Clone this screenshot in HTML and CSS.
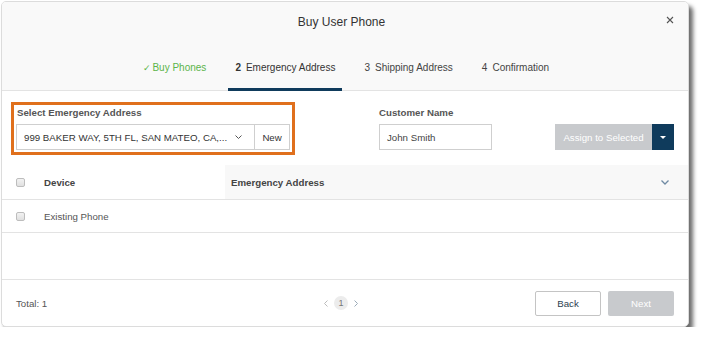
FILE: index.html
```html
<!DOCTYPE html>
<html lang="en">
<head>
<meta charset="utf-8">
<title>Buy User Phone</title>
<link rel="stylesheet" href="styles.css">
</head>
<body>
<div class="dialog">
  <header class="dlg-header">
    <div class="title-row">
      <span></span>
      <h1 class="title">Buy User Phone</h1>
      <button class="close" aria-label="Close">
        <svg width="8" height="8" viewBox="0 0 8 8"><path d="M1 1L7 7M7 1L1 7" stroke="#555" stroke-width="1.1" fill="none"/></svg>
      </button>
    </div>
    <nav class="steps">
      <span class="step done"><span class="check">✓</span>Buy Phones</span>
      <span class="step active"><b class="num">2</b>Emergency Address</span>
      <span class="step"><span class="num">3</span>Shipping Address</span>
      <span class="step"><span class="num">4</span>Confirmation</span>
    </nav>
  </header>

  <section class="content">
    <div class="form-row">
      <div class="highlight">
        <label class="field-label">Select Emergency Address</label>
        <div class="select-group">
          <div class="select">
            <span class="select-text">999 BAKER WAY, 5TH FL, SAN MATEO, CA,...</span>
            <svg class="chev" width="7" height="4" viewBox="0 0 7 4"><polyline points="0.5,0.5 3.5,3.5 6.5,0.5" stroke="#555" stroke-width="1" fill="none"/></svg>
          </div>
          <button class="new-btn">New</button>
        </div>
      </div>
      <div class="field customer">
        <label class="field-label">Customer Name</label>
        <input class="text-input" type="text" value="John Smith">
      </div>
      <div class="split-btn">
        <button class="assign">Assign to Selected</button>
        <button class="caret-btn" aria-label="More">
          <svg width="6" height="3" viewBox="0 0 6 3"><polygon points="0,0 6,0 3,3" fill="#fff"/></svg>
        </button>
      </div>
    </div>

    <div class="table">
      <div class="thead">
        <div class="cell-check"><span class="checkbox"></span></div>
        <div class="cell-device">Device</div>
        <div class="cell-addr">
          <span>Emergency Address</span>
          <svg width="8" height="5" viewBox="0 0 8 5"><polyline points="0.5,0.5 4,4 7.5,0.5" stroke="#6f8aa3" stroke-width="1.3" fill="none"/></svg>
        </div>
      </div>
      <div class="trow">
        <div class="cell-check"><span class="checkbox"></span></div>
        <div class="cell-device">Existing Phone</div>
        <div class="cell-addr"></div>
      </div>
    </div>
  </section>

  <footer class="dlg-footer">
    <div class="total">Total: 1</div>
    <div class="pager">
      <svg width="4" height="7" viewBox="0 0 4 7"><polyline points="3.5,0.5 0.5,3.5 3.5,6.5" stroke="#bbb" stroke-width="1" fill="none"/></svg>
      <span class="page">1</span>
      <svg width="4" height="7" viewBox="0 0 4 7"><polyline points="0.5,0.5 3.5,3.5 0.5,6.5" stroke="#9aaab8" stroke-width="1" fill="none"/></svg>
    </div>
    <div class="actions">
      <button class="btn back">Back</button>
      <button class="btn next">Next</button>
    </div>
  </footer>
</div>
</body>
</html>
```

FILE: styles.css
```css
* { box-sizing: border-box; }

html, body {
  margin: 0;
  padding: 0;
  background: #fff;
  font-family: "Liberation Sans", Arial, sans-serif;
  color: #444;
}

button, input {
  font-family: inherit;
}

.dialog {
  margin: 1px 0 0 1px;
  width: 688px;
  height: 326px;
  border: 1px solid #dcdcdc;
  border-radius: 5px;
  background: #fff;
  box-shadow: 4px 5px 4px rgba(0, 0, 0, 0.58);
  display: flex;
  flex-direction: column;
  overflow: hidden;
}

/* Header */
.dlg-header {
  height: 89px;
  background: #f9f9f9;
  border-bottom: 1px solid #e3e3e3;
  display: flex;
  flex-direction: column;
}

.title-row {
  height: 40px;
  display: grid;
  grid-template-columns: 1fr auto 1fr;
  align-items: center;
  padding: 0 14px 0 7px;
}

.title {
  margin: 0;
  font-size: 12px;
  font-weight: normal;
  color: #333;
  line-height: 40px;
}

.close {
  justify-self: end;
  border: 0;
  background: transparent;
  padding: 0;
  width: 9px;
  height: 9px;
  margin-top: -4px;
  display: flex;
  align-items: center;
  justify-content: center;
}

.steps {
  height: 48px;
  display: flex;
  justify-content: center;
  align-items: flex-end;
  gap: 15px;
  padding-left: 2px;
}

.step {
  font-size: 10px;
  line-height: 12px;
  color: #444;
  padding: 0 7px 14px;
  border-bottom: 3px solid transparent;
  margin-bottom: -1px;
  white-space: nowrap;
}

.step .num {
  margin-right: 5px;
}

.step.done {
  color: #5cb54a;
}

.step.done .check {
  font-size: 9px;
  margin-right: 2px;
  font-family: "DejaVu Sans", sans-serif;
}

.step.active {
  color: #333;
  border-bottom-color: #0f3b5c;
}

.step.active .num {
  font-weight: bold;
}

/* Content */
.content {
  flex: 1;
  display: flex;
  flex-direction: column;
}

.form-row {
  display: flex;
  align-items: flex-start;
  padding: 11px 14px 0 9px;
}

.highlight {
  width: 284px;
  border: 3px solid #e0701c;
  padding: 2px;
}

.field-label {
  display: block;
  font-size: 9.7px;
  font-weight: bold;
  line-height: 12px;
  color: #555;
  margin: 0 0 5px 1px;
}

.select-group {
  display: flex;
  height: 26px;
  border: 1px solid #cfcfcf;
  background: #fff;
}

.select {
  flex: 1;
  display: flex;
  align-items: center;
  padding: 0 12px 0 7px;
  gap: 8px;
}

.select-text {
  flex: 1;
  font-size: 9.7px;
  color: #333;
  white-space: nowrap;
  overflow: hidden;
}

.new-btn {
  width: 35px;
  border: 0;
  border-left: 1px solid #cfcfcf;
  background: #fff;
  font-size: 9.7px;
  color: #333;
  padding: 0;
}

.customer {
  margin: 5px 0 0 84px;
}

.customer .field-label {
  margin-left: 0;
}

.text-input {
  display: block;
  width: 113px;
  height: 26px;
  border: 1px solid #cfcfcf;
  padding: 0 7px;
  font-size: 9.7px;
  color: #444;
  outline: none;
}

.split-btn {
  margin: 22px 0 0 auto;
  display: flex;
  height: 26px;
}

.assign {
  width: 97px;
  border: 0;
  background: #c8cacd;
  color: #fff;
  font-size: 9.7px;
  padding: 0;
}

.caret-btn {
  width: 22px;
  border: 0;
  background: #0f3b5c;
  padding: 0;
  display: flex;
  align-items: center;
  justify-content: center;
}

/* Table */
.table {
  margin-top: 10px;
}

.thead, .trow {
  display: grid;
  grid-template-columns: 34px 189px 1fr;
  border-bottom: 1px solid #e3e3e3;
}

.thead {
  height: 35px;
  font-weight: bold;
}

.trow {
  height: 33px;
}

.cell-check, .cell-device, .cell-addr {
  display: flex;
  align-items: center;
  font-size: 9.7px;
  color: #444;
}

.cell-check {
  padding-left: 14px;
}

.cell-device {
  padding-left: 8px;
}

.thead .cell-addr {
  background: #f8f8f8;
  padding: 0 19px 0 6px;
  justify-content: space-between;
}

.trow .cell-device {
  color: #555;
}

.checkbox {
  width: 9px;
  height: 9px;
  border: 1px solid #bdbdbd;
  border-radius: 2px;
  background: linear-gradient(#f2f2f2, #e0e0e0);
}

/* Footer */
.dlg-footer {
  height: 47px;
  border-top: 1px solid #e3e3e3;
  display: flex;
  align-items: center;
  padding: 0 14px;
}

.total {
  flex: 1;
  font-size: 9.7px;
  color: #555;
}

.pager {
  display: flex;
  align-items: center;
  gap: 6px;
  margin-right: 8px;
}

.page {
  width: 14px;
  height: 14px;
  border-radius: 50%;
  background: #ececec;
  color: #777;
  font-size: 9px;
  display: flex;
  align-items: center;
  justify-content: center;
}

.actions {
  flex: 1;
  display: flex;
  justify-content: flex-end;
  gap: 7px;
}

.btn {
  width: 66px;
  height: 25px;
  border-radius: 2px;
  font-size: 9.7px;
  padding: 0;
}

.back {
  background: #fff;
  border: 1px solid #c4c4c4;
  color: #2b3e50;
}

.next {
  background: #c8cacd;
  border: 0;
  color: #fff;
}
```
